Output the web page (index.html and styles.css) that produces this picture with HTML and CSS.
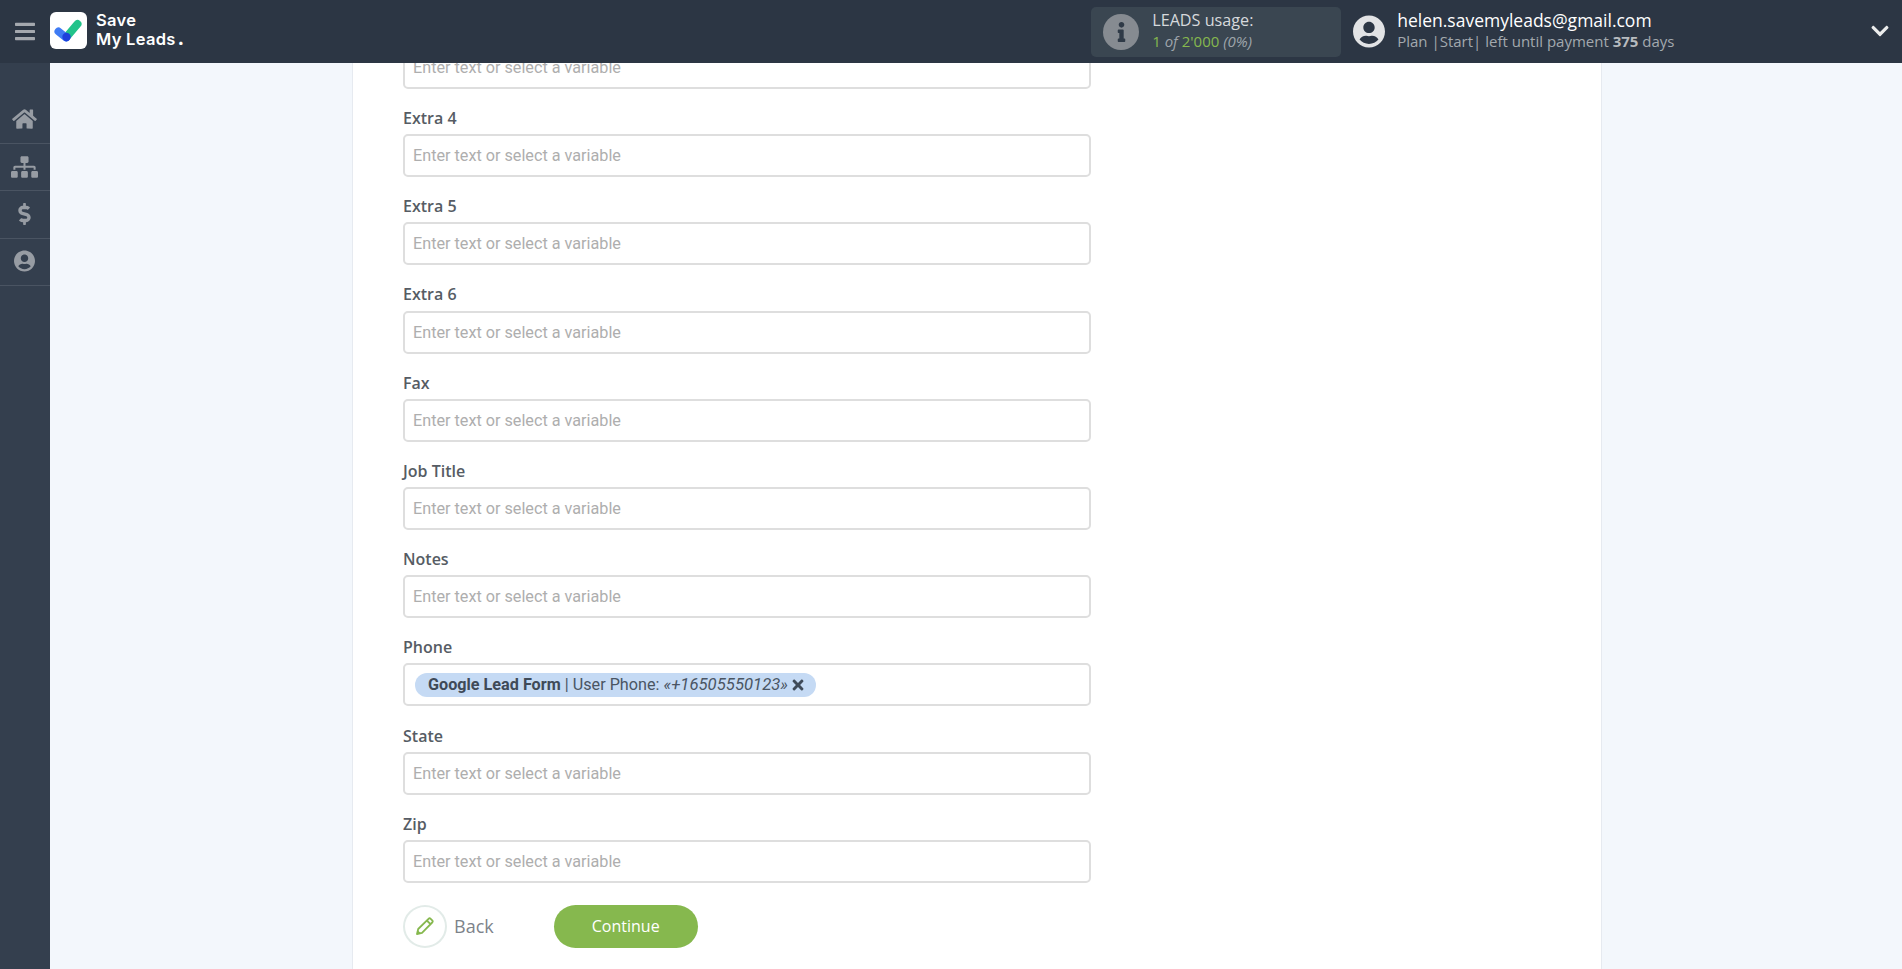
FILE: index.html
```html
<!DOCTYPE html>
<html lang="en">
<head>
<meta charset="utf-8">
<title>Save My Leads</title>
<link rel="stylesheet" href="styles.css">
</head>
<body>
<header class="topbar">
  <button class="burger" aria-label="Menu"><svg viewBox="0 0 448 512"><path d="M16 132h416c8.837 0 16-7.163 16-16V76c0-8.837-7.163-16-16-16H16C7.163 60 0 67.163 0 76v40c0 8.837 7.163 16 16 16zm0 160h416c8.837 0 16-7.163 16-16v-40c0-8.837-7.163-16-16-16H16c-8.837 0-16 7.163-16 16v40c0 8.837 7.163 16 16 16zm0 160h416c8.837 0 16-7.163 16-16v-40c0-8.837-7.163-16-16-16H16c-8.837 0-16 7.163-16 16v40c0 8.837 7.163 16 16 16z"/></svg></button>
  <div class="logo">
    <span class="logo-mark"><svg viewBox="0 0 37 37"><path class="chk-green" d="M16.5 25 L27.5 12"/><path class="chk-blue" d="M8.5 19.5 L16 25.5"/><circle class="chk-dot" cx="16.5" cy="25" r="4.2"/></svg></span>
    <span class="logo-text">Save<br>My Leads<b>.</b></span>
  </div>
  <div class="usage">
    <span class="usage-icon"><svg viewBox="0 0 192 512"><path d="M20 424.229h20V279.771H20c-11.046 0-20-8.954-20-20V212c0-11.046 8.954-20 20-20h112c11.046 0 20 8.954 20 20v212.229h20c11.046 0 20 8.954 20 20V492c0 11.046-8.954 20-20 20H20c-11.046 0-20-8.954-20-20v-47.771c0-11.046 8.954-20 20-20zM96 0C56.235 0 24 32.235 24 72s32.235 72 72 72 72-32.235 72-72S135.764 0 96 0z"/></svg></span>
    <div class="usage-text">
      <div class="usage-title">LEADS usage:</div>
      <div class="usage-count"><span class="green">1</span> <i>of</i> <span class="green">2'000</span> <i>(0%)</i></div>
    </div>
  </div>
  <div class="account">
    <svg class="account-icon" viewBox="0 0 496 512"><path d="M248 8C111 8 0 119 0 256s111 248 248 248 248-111 248-248S385 8 248 8zm0 96c48.6 0 88 39.4 88 88s-39.4 88-88 88-88-39.4-88-88 39.4-88 88-88zm0 344c-58.7 0-111.3-26.6-146.5-68.2 18.8-35.4 55.6-59.8 98.5-59.8 2.4 0 4.8.4 7.1 1.1 13 4.2 26.6 6.9 40.9 6.9 14.3 0 28-2.7 40.9-6.9 2.3-.7 4.7-1.1 7.1-1.1 42.9 0 79.7 24.4 98.5 59.8C359.3 421.4 306.7 448 248 448z"/></svg>
    <div class="account-text">
      <div class="account-mail">helen.savemyleads@gmail.com</div>
      <div class="account-plan">Plan |Start| left until payment <b>375</b> days</div>
    </div>
  </div>
  <svg class="chevron" viewBox="0 0 448 512"><path d="M207.029 381.476L12.686 187.132c-9.373-9.373-9.373-24.569 0-33.941l22.667-22.667c9.357-9.357 24.522-9.375 33.901-.04L224 284.505l154.745-154.021c9.379-9.335 24.544-9.317 33.901.04l22.667 22.667c9.373 9.373 9.373 24.569 0 33.941L240.971 381.476c-9.373 9.372-24.569 9.372-33.942 0z"/></svg>
</header>
<div class="layout">
  <nav class="sidebar">
    <a class="nav-item"><svg class="ic-home" viewBox="0 0 576 512"><path d="M280.37 148.26L96 300.11V464a16 16 0 0 0 16 16l112.06-.29a16 16 0 0 0 15.92-16V368a16 16 0 0 1 16-16h64a16 16 0 0 1 16 16v95.64a16 16 0 0 0 16 16.05L464 480a16 16 0 0 0 16-16V300L295.67 148.26a12.19 12.19 0 0 0-15.3 0zM571.6 251.47L488 182.56V44.05a12 12 0 0 0-12-12h-56a12 12 0 0 0-12 12v72.61L318.47 43a48 48 0 0 0-61 0L4.34 251.47a12 12 0 0 0-1.6 16.9l25.5 31A12 12 0 0 0 45.15 301l235.22-193.74a12.19 12.19 0 0 1 15.3 0L530.9 301a12 12 0 0 0 16.9-1.6l25.5-31a12 12 0 0 0-1.7-16.93z"/></svg></a>
    <a class="nav-item"><svg class="ic-map" viewBox="0 0 640 512"><path d="M128 352H32c-17.67 0-32 14.33-32 32v96c0 17.67 14.33 32 32 32h96c17.67 0 32-14.33 32-32v-96c0-17.67-14.33-32-32-32zm-24-80h192v48h48v-48h192v48h48v-57.59c0-21.17-17.23-38.41-38.41-38.41H344v-64h40c17.67 0 32-14.33 32-32V32c0-17.67-14.33-32-32-32H256c-17.67 0-32 14.33-32 32v96c0 17.67 14.33 32 32 32h40v64H94.41C73.23 224 56 241.23 56 262.41V320h48v-48zm264 80h-96c-17.67 0-32 14.33-32 32v96c0 17.67 14.33 32 32 32h96c17.67 0 32-14.33 32-32v-96c0-17.67-14.33-32-32-32zm240 0h-96c-17.67 0-32 14.33-32 32v96c0 17.67 14.33 32 32 32h96c17.67 0 32-14.33 32-32v-96c0-17.67-14.33-32-32-32z"/></svg></a>
    <a class="nav-item"><svg class="ic-dollar" viewBox="0 0 288 512"><path d="M209.2 233.4l-108-31.6C88.7 198.2 80 186.5 80 173.5c0-16.3 13.2-29.5 29.5-29.5h66.3c12.2 0 24.2 3.7 34.2 10.5 6.1 4.1 14.3 3.1 19.5-2l34.8-34c7.1-6.9 6.1-18.4-1.8-24.5C238 74.8 207.4 64.1 176 64V16c0-8.8-7.2-16-16-16h-32c-8.8 0-16 7.2-16 16v48h-2.5C45.8 64-5.4 118.7.5 183.6c4.2 46.1 39.4 83.6 83.8 96.6l102.5 30c12.5 3.7 21.2 15.3 21.2 28.3 0 16.3-13.2 29.5-29.5 29.5h-66.3C100 368 88 364.3 78 357.5c-6.1-4.1-14.3-3.1-19.5 2l-34.8 34c-7.1 6.9-6.1 18.4 1.8 24.5 24.5 19.2 55.1 29.9 86.5 30v48c0 8.8 7.2 16 16 16h32c8.8 0 16-7.2 16-16v-48.2c46.6-.9 90.3-28.6 105.7-72.7 21.5-61.6-14.6-124.8-72.5-141.7z"/></svg></a>
    <a class="nav-item"><svg class="ic-user" viewBox="0 0 496 512"><path d="M248 8C111 8 0 119 0 256s111 248 248 248 248-111 248-248S385 8 248 8zm0 96c48.6 0 88 39.4 88 88s-39.4 88-88 88-88-39.4-88-88 39.4-88 88-88zm0 344c-58.7 0-111.3-26.6-146.5-68.2 18.8-35.4 55.6-59.8 98.5-59.8 2.4 0 4.8.4 7.1 1.1 13 4.2 26.6 6.9 40.9 6.9 14.3 0 28-2.7 40.9-6.9 2.3-.7 4.7-1.1 7.1-1.1 42.9 0 79.7 24.4 98.5 59.8C359.3 421.4 306.7 448 248 448z"/></svg></a>
  </nav>
  <main class="content">
    <section class="card">
      <form class="form">
        <div class="field field-cut"><div class="input ph">Enter text or select a variable</div></div>
        <div class="field"><label class="label">Extra 4</label><div class="input ph">Enter text or select a variable</div></div>
        <div class="field"><label class="label">Extra 5</label><div class="input ph">Enter text or select a variable</div></div>
        <div class="field"><label class="label">Extra 6</label><div class="input ph">Enter text or select a variable</div></div>
        <div class="field"><label class="label">Fax</label><div class="input ph">Enter text or select a variable</div></div>
        <div class="field"><label class="label">Job Title</label><div class="input ph">Enter text or select a variable</div></div>
        <div class="field"><label class="label">Notes</label><div class="input ph">Enter text or select a variable</div></div>
        <div class="field"><label class="label">Phone</label>
          <div class="input"><span class="pill"><b>Google Lead Form</b> | User Phone: <i class="pill-val">«+16505550123»</i><svg class="pill-x" viewBox="0 0 352 512"><path d="M242.72 256l100.07-100.07c12.28-12.28 12.28-32.19 0-44.48l-22.24-22.24c-12.28-12.28-32.19-12.28-44.48 0L176 189.28 75.93 89.21c-12.28-12.28-32.19-12.28-44.48 0L9.21 111.45c-12.28 12.28-12.28 32.19 0 44.48L109.28 256 9.21 356.07c-12.28 12.28-12.28 32.19 0 44.48l22.24 22.24c12.28 12.28 32.2 12.28 44.48 0L176 322.72l100.07 100.07c12.28 12.28 32.2 12.28 44.48 0l22.24-22.24c12.28-12.28 12.28-32.19 0-44.48L242.72 256z"/></svg></span></div>
        </div>
        <div class="field"><label class="label">State</label><div class="input ph">Enter text or select a variable</div></div>
        <div class="field"><label class="label">Zip</label><div class="input ph">Enter text or select a variable</div></div>
        <div class="actions">
          <a class="back"><span class="back-circle"><svg viewBox="0 0 18 18"><path class="pencil-line" d="M1 17 L2.2 12 L12.5 1.8 a1.6 1.6 0 0 1 2.2 0 L16.2 3.3 a1.6 1.6 0 0 1 0 2.2 L6 15.8 Z M10.8 3.5 L14.5 7.2"/><path class="pencil-tip" d="M1 17 L1.8 13.2 L4.8 16.2 Z"/></svg></span>Back</a>
          <a class="continue">Continue</a>
        </div>
      </form>
    </section>
  </main>
</div>
</body>
</html>
```
FILE: styles.css
```css
* { box-sizing: border-box; }
html, body { margin: 0; height: 100%; }
body {
  display: flex;
  flex-direction: column;
  overflow: hidden;
  font-family: "Open Sans", sans-serif;
  background: #f3f7fc;
}
.topbar {
  flex: none;
  height: 63px;
  display: flex;
  align-items: center;
  background: #2c3644;
}
.burger {
  width: 50px;
  height: 63px;
  padding: 0;
  border: 0;
  background: none;
  display: flex;
  align-items: center;
  justify-content: center;
}
.burger svg { width: 20px; height: 23px; fill: #a4a8ae; }
.logo { display: flex; align-items: center; gap: 9px; }
.logo-mark {
  width: 37px;
  height: 37px;
  margin-top: -3px;
  background: #fff;
  border-radius: 6px;
  display: block;
}
.logo-mark svg { display: block; width: 37px; height: 37px; }
.chk-green { stroke: #22c38a; stroke-width: 8; stroke-linecap: round; fill: none; }
.chk-blue { stroke: #3f7bf4; stroke-width: 8; stroke-linecap: round; fill: none; }
.chk-dot { fill: #1e40dc; }
.logo-text {
  font-family: Inter, sans-serif;
  font-weight: 600;
  font-size: 16.5px;
  line-height: 18.5px;
  color: #fff;
  margin-top: -4px;
  letter-spacing: .3px;
}
.logo-text b { margin-left: 2px; }
.usage {
  margin-left: 907px;
  width: 250px;
  height: 50px;
  border-radius: 5px;
  background: #3a4651;
  display: flex;
  align-items: center;
  padding-left: 12px;
}
.usage-icon {
  width: 36px;
  height: 36px;
  border-radius: 50%;
  background: #868b91;
  display: flex;
  align-items: center;
  justify-content: center;
  flex: none;
}
.usage-icon svg { width: 9px; height: 20px; fill: #2f3a47; }
.usage-text { margin-left: 13px; }
.usage-title { font-size: 16.2px; line-height: 20px; color: #d6d9dc; margin-top: -2px; }
.usage-count { font-size: 15px; line-height: 20px; color: #9ea5ab; margin-top: 1px; }
.green { color: #86b84e; }
.account { margin-left: 12px; display: flex; align-items: center; }
.account-icon { width: 32px; height: 33px; fill: #e2e3e5; flex: none; }
.account-text { margin-left: 12px; }
.account-mail { font-size: 17.5px; line-height: 21px; color: #fff; margin-top: -2px; }
.account-plan { font-size: 15px; line-height: 20px; color: #a3a9ae; }
.account-plan b { font-weight: 700; color: #b7bbbf; }
.chevron { position: absolute; top: 21px; left: 1871px; width: 18px; height: 20px; fill: #eceded; }
.layout { flex: 1; min-height: 0; display: flex; }
.sidebar {
  flex: none;
  width: 50px;
  padding-top: 33.7px;
  background: #343f4e;
}
.nav-item {
  display: flex;
  align-items: center;
  justify-content: center;
  height: 47.33px;
  padding: 0 .5px 1px 0;
  border-bottom: 1px solid #4a5462;
}
.nav-item svg { fill: #979ca3; display: block; }
.ic-home { width: 25px; height: 22px; }
.ic-map { width: 27px; height: 22px; }
.ic-dollar { width: 13px; height: 22px; }
.ic-user { width: 21px; height: 22px; }
.content {
  flex: 1;
  min-width: 0;
  overflow: hidden;
  padding: 0 300px 0 302px;
}
.card {
  display: flow-root;
  height: 100%;
  background: #fff;
  border-left: 1px solid #e6eaf0;
  border-right: 1px solid #e6eaf0;
  padding-left: 50px;
}
.form { width: 688px; margin-top: -17.2px; }
.field { margin-bottom: 19.15px; }
.label {
  display: block;
  font-size: 16px;
  font-weight: 600;
  line-height: 20px;
  color: #565c64;
  margin-bottom: 6.1px;
}
.input {
  height: 43px;
  border: 2px solid #dedede;
  border-radius: 5px;
  background: #fff;
  padding: 0 8px;
  display: flex;
  align-items: center;
  font-family: Roboto, sans-serif;
  font-size: 16.2px;
}
.ph { color: #aeaeae; }
.pill {
  display: inline-flex;
  align-items: center;
  height: 24px;
  margin-left: 2px;
  padding: 0 12px 0 13px;
  border-radius: 12px;
  background: #c5daf4;
  color: #4a5563;
  white-space: pre;
}
.pill b { font-weight: 700; color: #3f4a58; }
.pill-val { font-size: 16.7px; }
.pill-x { width: 12px; height: 16px; margin-left: 4px; fill: #3f4a58; }
.actions { display: flex; align-items: center; margin-top: 22px; }
.back {
  display: flex;
  align-items: center;
  gap: 7px;
  font-size: 18px;
  color: #7d838a;
}
.back-circle {
  width: 44px;
  height: 43px;
  border-radius: 50%;
  border: 2px solid #e2ebe8;
  display: flex;
  align-items: center;
  justify-content: center;
}
.back-circle svg { width: 18px; height: 18px; }
.pencil-line { fill: none; stroke: #86b84e; stroke-width: 1.8; stroke-linejoin: round; }
.pencil-tip { fill: #86b84e; }
.continue {
  margin-left: 60px;
  width: 144px;
  height: 43px;
  border-radius: 22px;
  background: #86b84e;
  color: #fff;
  font-size: 16px;
  display: flex;
  align-items: center;
  justify-content: center;
}
```
